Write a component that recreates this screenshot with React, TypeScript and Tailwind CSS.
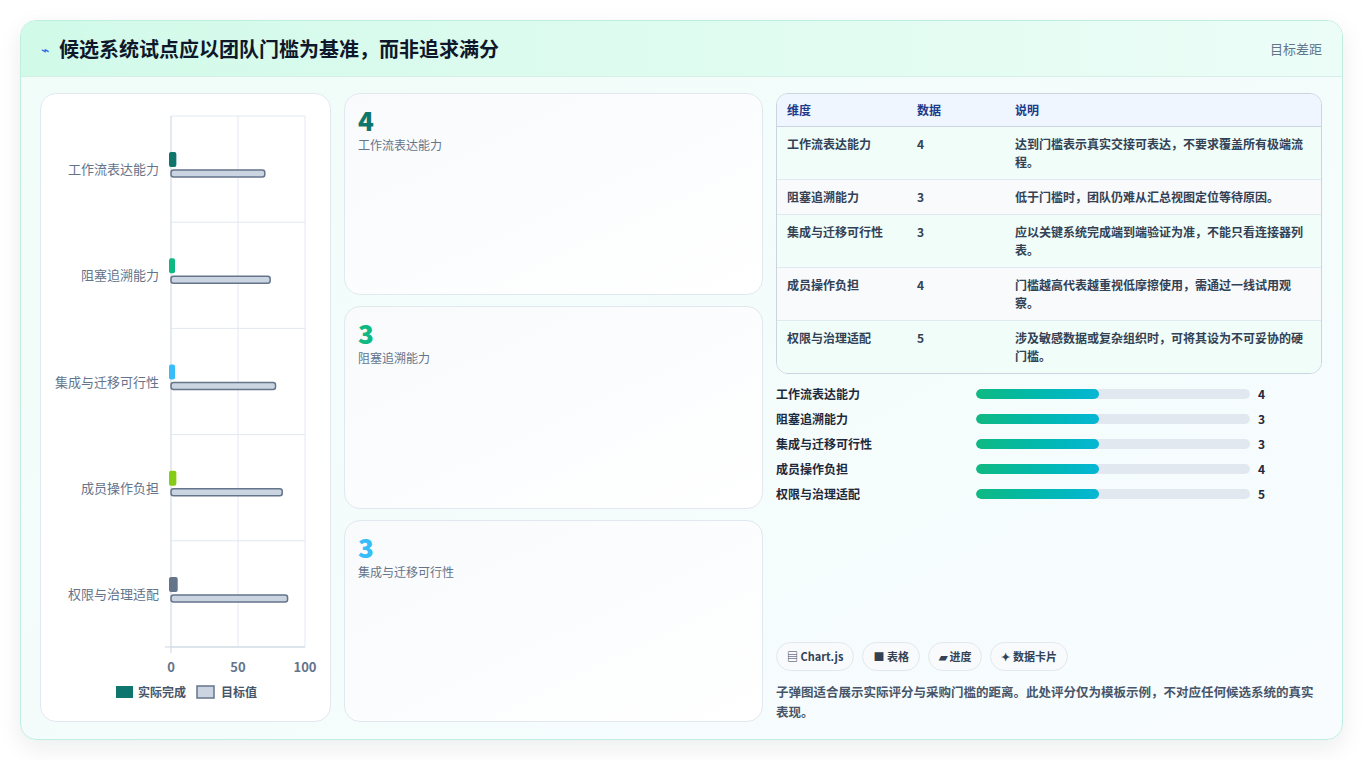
const rows = [
  { name: "工作流表达能力", score: 4, target: 70, color: "#0f766e", note: "达到门槛表示真实交接可表达，不要求覆盖所有极端流程。" },
  { name: "阻塞追溯能力", score: 3, target: 74, color: "#10b981", note: "低于门槛时，团队仍难从汇总视图定位等待原因。" },
  { name: "集成与迁移可行性", score: 3, target: 78, color: "#38bdf8", note: "应以关键系统完成端到端验证为准，不能只看连接器列表。" },
  { name: "成员操作负担", score: 4, target: 83, color: "#84cc16", note: "门槛越高代表越重视低摩擦使用，需通过一线试用观察。" },
  { name: "权限与治理适配", score: 5, target: 87, color: "#64748b", note: "涉及敏感数据或复杂组织时，可将其设为不可妥协的硬门槛。" },
];

function Chart() {
  const x0 = 130, x1 = 264, top = 22, bottom = 553;
  const rowH = (bottom - top) / 5;
  const sx = (v: number) => x0 + ((x1 - x0) * v) / 100;
  return (
    <svg width="290" height="627" className="block">
      <line x1={x0} y1={top} x2={x1} y2={top} stroke="#e2e8f0" />
      {[0, 1, 2, 3, 4].map((i) => (
        <line key={i} x1={x0} y1={top + rowH * (i + 1)} x2={x1} y2={top + rowH * (i + 1)} stroke="#e2e8f0" />
      ))}
      <line x1={sx(50)} y1={top} x2={sx(50)} y2={bottom} stroke="#e2e8f0" />
      <line x1={x1} y1={top} x2={x1} y2={bottom} stroke="#e2e8f0" />
      <line x1={x0} y1={top} x2={x0} y2={bottom + 6} stroke="#cbd5e1" />
      <line x1={x0 - 6} y1={bottom} x2={x1} y2={bottom} stroke="#cbd5e1" />
      {rows.map((r, i) => {
        const cy = top + rowH * i + rowH / 2;
        return (
          <g key={r.name}>
            <text x={x0 - 12} y={cy + 5} textAnchor="end" fontSize="13" fill="#64748b">{r.name}</text>
            <rect x={x0 - 2} y={cy - 17} width={sx(r.score) - x0 + 2} height={15} rx="2" fill={r.color} />
            <rect x={x0} y={cy + 1} width={sx(r.target) - x0} height={7} rx="2.5" fill="#cbd5e1" stroke="#64748b" strokeWidth="1.5" />
          </g>
        );
      })}
      {[0, 50, 100].map((v) => (
        <text key={v} x={sx(v)} y={bottom + 25} textAnchor="middle" fontSize="13" fontWeight="600" fill="#64748b">{v}</text>
      ))}
      <rect x="75" y="592" width="17" height="12" fill="#0f766e" />
      <text x="97" y="603" fontSize="12" fontWeight="600" fill="#475569">实际完成</text>
      <rect x="156" y="592" width="17" height="12" fill="#cbd5e1" stroke="#64748b" strokeWidth="1.5" />
      <text x="180" y="603" fontSize="12" fontWeight="600" fill="#475569">目标值</text>
    </svg>
  );
}

export default function App() {
  return (
    <div className="min-h-screen bg-white p-5 text-[#1e293b]" style={{ fontFamily: '"Noto Sans CJK SC", "Noto Sans", sans-serif' }}>
      <div className="h-[720px] rounded-2xl border border-[#bfeee0] bg-gradient-to-br from-[#f0fdf8] to-[#f8fcff] shadow-[0_8px_24px_rgba(15,23,42,0.08)] overflow-hidden flex flex-col">
        <div className="h-[56px] shrink-0 flex items-center justify-between px-5 bg-gradient-to-r from-[#d1fae9] to-[#ecfdf7] border-b border-[#d5efe6]">
          <div className="flex items-center gap-[10px]">
            <span className="text-[#2563eb] text-sm">⌁</span>
            <h1 className="text-[20px] font-bold text-[#0f172a]">候选系统试点应以团队门槛为基准，而非追求满分</h1>
          </div>
          <span className="text-[13px] text-[#64748b]">目标差距</span>
        </div>
        <div className="flex-1 flex gap-[13px] pl-[19px] pr-5 pt-4 pb-[19px]">
          <div className="w-[291px] shrink-0 rounded-2xl border border-[#e2e8f0] bg-white">
            <Chart />
          </div>
          <div className="w-[419px] shrink-0 flex flex-col gap-[11px]">
            {rows.slice(0, 3).map((r) => (
              <div key={r.name} className="flex-1 rounded-2xl border border-[#e2e8f0] bg-gradient-to-br from-[#f8fafc] to-white px-[13px] py-[10px]">
                <div className="text-[26px] font-extrabold leading-8" style={{ color: r.color }}>{r.score}</div>
                <div className="text-[12px] text-[#64748b]">{r.name}</div>
              </div>
            ))}
          </div>
          <div className="flex-1 flex flex-col">
            <div className="rounded-xl border border-[#cbd5e1] overflow-hidden text-[12px]">
              <div className="flex h-[33px] items-center bg-[#eff6ff] font-bold text-[#1e3a8a] border-b border-[#cbd5e1]">
                <div className="w-[140px] pl-[10px]">维度</div>
                <div className="w-[98px]">数据</div>
                <div className="flex-1">说明</div>
              </div>
              {rows.map((r, i) => (
                <div key={r.name} className={`flex py-[8px] font-semibold text-[#334155] ${i < 4 ? "border-b border-[#e2e8f0]" : ""} ${i % 2 === 1 ? "bg-[#f8fafc]" : "bg-[#f0fdf8]"}`}>
                  <div className="w-[140px] pl-[10px] leading-[18px]">{r.name}</div>
                  <div className="w-[98px] leading-[18px]">{r.score}</div>
                  <div className="flex-1 pr-[14px] leading-[18px]">{r.note}</div>
                </div>
              ))}
            </div>
            <div className="mt-[11px] flex flex-col gap-[7px]">
              {rows.map((r) => (
                <div key={r.name} className="flex items-center h-[18px] text-[12px] font-semibold text-[#1e293b]">
                  <div className="w-[200px]">{r.name}</div>
                  <div className="w-[274px] h-[10px] rounded-full bg-[#e2e8f0] overflow-hidden">
                    <div className="h-full w-[45%] rounded-full bg-gradient-to-r from-[#10b981] to-[#06b6d4]" />
                  </div>
                  <div className="pl-2 font-bold">{r.score}</div>
                </div>
              ))}
            </div>
            <div className="mt-auto flex gap-2 text-[11px] font-semibold text-[#334155]">
              {["▤ Chart.js", "■ 表格", "▰ 进度", "✦ 数据卡片"].map((t) => (
                <span key={t} className="h-[29px] px-[10px] flex items-center rounded-full border border-[#e2e8f0] bg-[#f8fafc]">{t}</span>
              ))}
            </div>
            <p className="mt-[11px] text-[12.5px] font-semibold leading-[20px] text-[#475569]">
              子弹图适合展示实际评分与采购门槛的距离。此处评分仅为模板示例，不对应任何候选系统的真实表现。
            </p>
          </div>
        </div>
      </div>
    </div>
  );
}
